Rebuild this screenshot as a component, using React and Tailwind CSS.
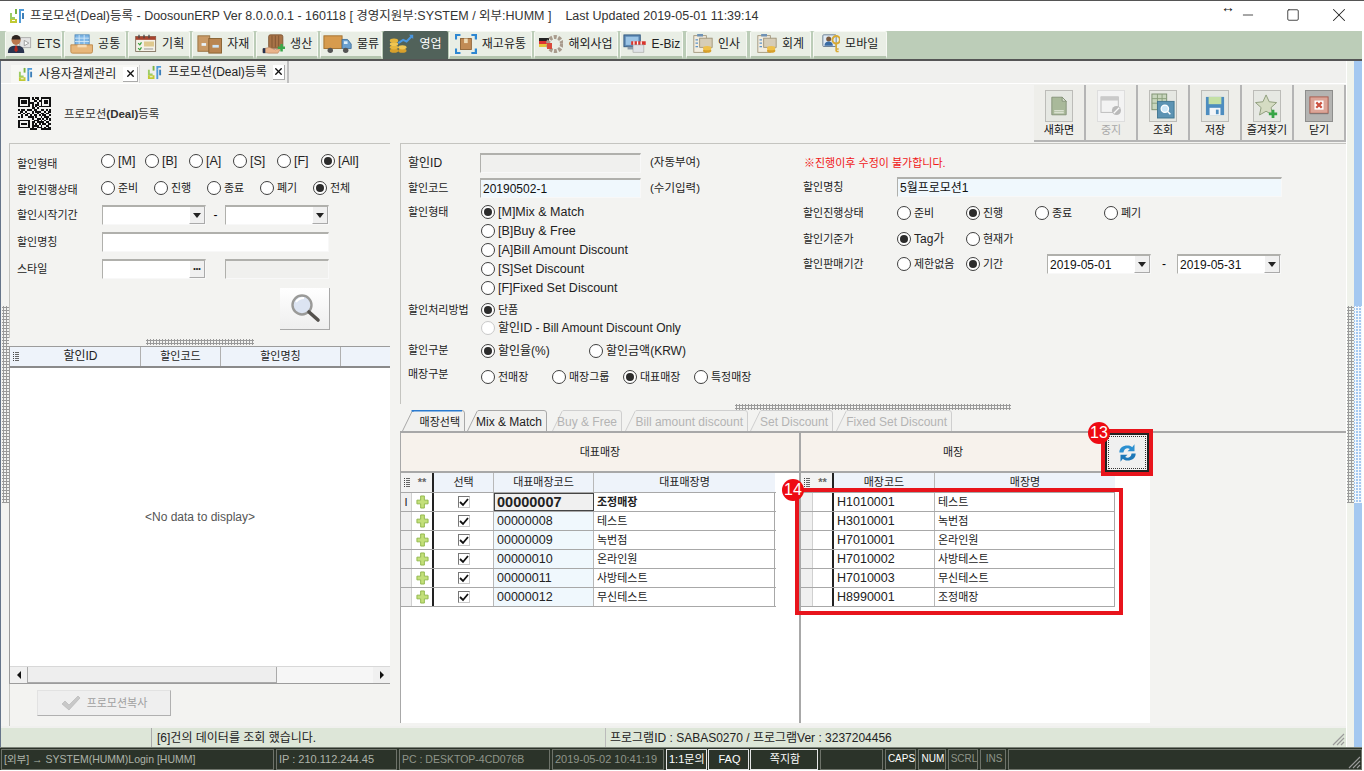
import React from "react";
import { Minus, Square, X } from "lucide-react";

const menus = [
  ["ETS", "w-[57px] mr-[2px]", "person"],
  ["공통", "w-[62px] mr-[2px]", "tray"],
  ["기획", "w-[62px] mr-[2px]", "plan"],
  ["자재", "w-[62px] mr-[2px]", "box"],
  ["생산", "w-[62px] mr-[2px]", "hand"],
  ["물류", "w-[62px] mr-[1px]", "truck"],
  ["영업", "w-[65px] mr-[1px]", "chart"],
  ["재고유통", "w-[83px] mr-[2px]", "stock"],
  ["해외사업", "w-[84px] mr-[2px]", "gear"],
  ["E-Biz", "w-[63px] mr-[3px]", "shop"],
  ["인사", "w-[61px] mr-[3px]", "clip"],
  ["회계", "w-[61px] mr-[2px]", "clip"],
  ["모바일", "w-[74px]", "key"],
];

function MenuIcon({ type }) {
  if (type === "person")
    return (
      <svg width="28" height="22" viewBox="0 0 28 22">
        <rect x="14" y="4" width="12" height="11" fill="#e4e4e4" stroke="#aaa" />
        <path d="M19 7l5 3-5 3z" fill="#fff" stroke="#999" />
        <circle cx="10" cy="7" r="5" fill="#b9764c" />
        <path d="M5 6a5 5 0 0110 0z" fill="#2c2420" />
        <path d="M1 21c0-6 3-8 9-8s9 2 9 8z" fill="#2a3550" />
        <path d="M9 13h2l1 5-2 2-2-2z" fill="#b3261e" />
      </svg>
    );
  if (type === "tray")
    return (
      <svg width="28" height="24" viewBox="0 0 28 24">
        <rect x="6" y="1" width="17" height="14" fill="#7db6e6" stroke="#4f87b8" />
        <path d="M6 5h17M6 9h17M11 1v14M17 1v14" stroke="#d9ecf9" />
        <path d="M1 13h26v8a2 2 0 01-2 2H3a2 2 0 01-2-2z" fill="#e7b77b" stroke="#b98444" />
        <rect x="9" y="13" width="11" height="3" fill="#f6dcb6" />
      </svg>
    );
  if (type === "plan")
    return (
      <svg width="28" height="24" viewBox="0 0 28 24">
        <rect x="2" y="3" width="24" height="18" fill="#f4f1e8" stroke="#7a6a58" />
        <path d="M2 3h24v4H2z" fill="#a8442e" />
        <path d="M6 1v4M12 1v4M18 1v4" stroke="#444" strokeWidth="1.5" />
        <path d="M5 11l2 2 2-3M5 17l2 2 2-3" stroke="#38a03c" strokeWidth="1.5" fill="none" />
        <rect x="12" y="9" width="12" height="6" fill="#dfc98f" />
        <path d="M12 18h11" stroke="#888" />
      </svg>
    );
  if (type === "box")
    return (
      <svg width="28" height="22" viewBox="0 0 28 22">
        <rect x="1" y="2" width="13" height="17" fill="#c99a66" stroke="#96703f" />
        <rect x="13" y="5" width="14" height="16" fill="#b98551" stroke="#86602f" />
        <rect x="5" y="10" width="5" height="3" fill="#e9f3fa" />
        <rect x="17" y="12" width="7" height="3" fill="#cfe4f5" />
      </svg>
    );
  if (type === "hand")
    return (
      <svg width="28" height="24" viewBox="0 0 28 24">
        <rect x="8" y="1" width="17" height="16" rx="2" fill="#a87347" stroke="#7b5230" />
        <path d="M12 2v14M16 2v14M20 2v14" stroke="#7b5230" />
        <path d="M1 18l8-2 7 3 7-2-4 6H8l-7-1z" fill="#e9b48c" stroke="#a7704a" strokeWidth=".6" />
        <path d="M1 17h3v6H1z" fill="#26324f" />
        <path d="M22 12h3v3h3v3h-3v3h-3v-3h-3v-3h3z" fill="#3aa84a" />
      </svg>
    );
  if (type === "truck")
    return (
      <svg width="32" height="22" viewBox="0 0 32 22">
        <rect x="1" y="2" width="20" height="14" fill="#d79b4e" stroke="#a26f2c" />
        <path d="M21 6h6l4 5v5H21z" fill="#6aa0d0" stroke="#44739c" />
        <rect x="23" y="8" width="4" height="3" fill="#dff0fb" />
        <circle cx="8" cy="18" r="3" fill="#555" />
        <circle cx="25" cy="18" r="3" fill="#555" />
      </svg>
    );
  if (type === "chart")
    return (
      <svg width="30" height="24" viewBox="0 0 30 24">
        <ellipse cx="6" cy="20" rx="5" ry="2.500" fill="#d7a02c" />
        <ellipse cx="6" cy="16" rx="5" ry="2.500" fill="#e6b63e" />
        <ellipse cx="6" cy="12" rx="5" ry="2.500" fill="#f0c653" />
        <ellipse cx="6" cy="8" rx="5" ry="2.500" fill="#e6b63e" />
        <ellipse cx="16" cy="20" rx="5" ry="2.500" fill="#d7a02c" />
        <ellipse cx="16" cy="16" rx="5" ry="2.500" fill="#f0c653" />
        <path d="M11 11l6-4 4 2 7-7" stroke="#4b97df" strokeWidth="2.500" fill="none" />
        <path d="M24 1h5v5z" fill="#4b97df" />
      </svg>
    );
  if (type === "stock")
    return (
      <svg width="24" height="22" viewBox="0 0 24 22">
        <path d="M1 6V1h5M18 1h5v5M23 16v5h-5M6 21H1v-5" stroke="#2d87d2" strokeWidth="2.500" fill="none" />
        <rect x="6" y="5" width="12" height="12" fill="#c18b55" stroke="#8e6234" />
        <rect x="10" y="5" width="4" height="5" fill="#eedcb8" />
      </svg>
    );
  if (type === "gear")
    return (
      <svg width="24" height="20" viewBox="0 0 24 20">
        <rect x="0" y="4" width="10" height="3" fill="#222" />
        <rect x="0" y="7" width="10" height="3" fill="#d33" />
        <rect x="0" y="10" width="10" height="3" fill="#e5c33b" />
        <circle cx="16" cy="10" r="7" fill="none" stroke="#a89b8d" strokeWidth="4" strokeDasharray="3 1.500" />
        <rect x="8" y="9" width="5" height="6" fill="#d94a3b" />
      </svg>
    );
  if (type === "shop")
    return (
      <svg width="26" height="22" viewBox="0 0 26 22">
        <rect x="1" y="1" width="18" height="13" fill="#5d89b5" stroke="#33587e" />
        <rect x="3" y="3" width="14" height="9" fill="#9cc4e5" />
        <path d="M5 14h10v3H5z" fill="#8a99a8" />
        <path d="M9 8h16v4H9z" fill="#d8342c" />
        <path d="M12 8v4M16 8v4M20 8v4" stroke="#fff" strokeWidth="1.400" />
        <rect x="11" y="12" width="12" height="8" fill="#dfe3e6" stroke="#888" strokeWidth=".5" />
      </svg>
    );
  if (type === "clip")
    return (
      <svg width="24" height="24" viewBox="0 0 24 24">
        <rect x="1" y="2" width="15" height="20" fill="#f2ede0" stroke="#9b8e73" />
        <rect x="5" y="0" width="7" height="3" fill="#6f92b5" />
        <path d="M3 7h3M3 11h3M3 15h3" stroke="#5c93c8" strokeWidth="1.500" />
        <rect x="8" y="5" width="15" height="11" fill="#d6cdb7" stroke="#9b8e73" />
        <ellipse cx="17" cy="20" rx="5" ry="2.500" fill="#d7a02c" />
        <ellipse cx="17" cy="17" rx="5" ry="2.500" fill="#eec14c" />
      </svg>
    );
  return (
    <svg width="22" height="24" viewBox="0 0 22 24">
      <rect x="1" y="1" width="16" height="14" rx="1" fill="#dfeaf4" stroke="#586d86" />
      <circle cx="8" cy="6" r="3" fill="#7a5a3f" />
      <path d="M3 14c0-4 3-5 5-5s5 1 5 5z" fill="#3a6ca3" />
      <circle cx="17" cy="7" r="4.500" fill="none" stroke="#d8aa35" strokeWidth="2.400" />
      <path d="M17 11v10M17 18h3M17 21h3" stroke="#d8aa35" strokeWidth="2" />
    </svg>
  );
}

function AppLogo({ size = 16 }) {
  return (
    <svg width={size} height={size} viewBox="0 0 16 16" className="shrink-0">
      <path d="M6 1h2v5H6z" fill="#7cb342" />
      <path d="M1 5h2v4h3v2H1z" fill="#9ccc65" />
      <path d="M1 11h7v4H1zM3 12v1h3v-1z" fill="#c0ca33" fillRule="evenodd" />
      <path d="M10 5h2v10h-2z" fill="#4f9bd9" />
      <path d="M10 1h5v2h-3v2h-2z" fill="#4f9bd9" />
      <path d="M13 5h2v6h-2z" fill="#3d7fb9" />
    </svg>
  );
}

function QrCode() {
  const rows = [
    "1111111010110111111",
    "1000001011010100001",
    "1011101001101101101",
    "1011101110010101101",
    "1000001010110100001",
    "1111111010101111111",
    "0000000011010000000",
    "1011011101100110101",
    "0110100010111001011",
    "1101011010010110110",
    "0010110101101011001",
    "1010001110100101110",
    "0000000010011010101",
    "1111111001110101001",
    "1000001011011110110",
    "1011101010101011011",
    "1000001011110100110",
    "1111111010011101011",
    "0000000111100111111",
  ];
  return (
    <svg width="33" height="33" viewBox="0 0 19 19" shapeRendering="crispEdges" className="shrink-0">
      {rows.map((row, y) =>
        row.split("").map((c, x) => (c === "1" ? <rect key={x + "-" + y} x={x} y={y} width="1" height="1" fill="#111" /> : null))
      )}
    </svg>
  );
}

function ToolIcon({ type }) {
  if (type === "new")
    return (
      <svg width="16" height="22" viewBox="0 0 20 24">
        <path d="M1 1h13l5 5v17H1z" fill="#a9b99a" stroke="#7c8a70" />
        <path d="M14 1v5h5z" fill="#dbe4d2" stroke="#7c8a70" />
        <path d="M4 18h12M4 20.500h12" stroke="#f1f5ec" strokeWidth="1.200" />
      </svg>
    );
  if (type === "stop")
    return (
      <svg width="22" height="20" viewBox="0 0 24 22" opacity=".65">
        <rect x="1" y="1" width="19" height="17" fill="#f4f4f4" stroke="#9a9a9a" />
        <rect x="1" y="1" width="19" height="4" fill="#b5b5b5" />
        <circle cx="18" cy="16" r="5" fill="#9c9c9c" />
        <path d="M15 19l6-6" stroke="#fff" strokeWidth="1.400" />
      </svg>
    );
  if (type === "search")
    return (
      <svg width="24" height="26" viewBox="0 0 26 28">
        <rect x="1" y="1" width="16" height="17" fill="#c8d6bd" stroke="#7c8f70" />
        <path d="M1 6h16M1 11h16M7 1v17M12 1v17" stroke="#8aa07c" />
        <rect x="7" y="9" width="18" height="18" fill="#5c93b3" stroke="#40758f" />
        <circle cx="15" cy="17" r="4" fill="#cfe8f7" stroke="#fff" strokeWidth="1.400" />
        <path d="M18 20l3 3" stroke="#fff" strokeWidth="1.600" />
      </svg>
    );
  if (type === "save")
    return (
      <svg width="20" height="20" viewBox="0 0 22 22">
        <path d="M1 1h20v20H1z" fill="#4d8dbf" />
        <rect x="4" y="1" width="14" height="8" fill="#c4e0a4" />
        <rect x="5" y="13" width="12" height="8" fill="#f2f5f8" />
        <rect x="12" y="15" width="3" height="5" fill="#4d8dbf" />
      </svg>
    );
  if (type === "fav")
    return (
      <svg width="24" height="24" viewBox="0 0 26 26">
        <path d="M12 1l3.400 7.400 8 .9-6 5.400 1.700 8-7.100-4-7.100 4 1.700-8-6-5.400 8-.9z" fill="#d5dcc3" stroke="#8b9a78" />
        <path d="M18 17h3v3h3v3h-3v3h-3v-3h-3v-3h3z" fill="#37a547" />
      </svg>
    );
  return (
    <svg width="20" height="20" viewBox="0 0 22 22">
      <rect x="1" y="1" width="20" height="18" fill="#dca598" stroke="#a8584a" />
      <rect x="6" y="5" width="10" height="10" fill="#fff" />
      <path d="M8 7l6 6M14 7l-6 6" stroke="#cc5241" strokeWidth="2.400" />
      <rect x="1" y="19" width="20" height="1" fill="#777" />
    </svg>
  );
}

function ToolButton({ label, type, disabled, dark }) {
  return (
    <div className="flex flex-col items-center w-[52px] h-[57px] bg-[#eeeeea] border-r-2 border-b-2 border-[#b5b5b5] pt-[5px]">
      <div className={`flex items-center justify-center w-[28px] h-[32px] border ${dark ? "bg-[#b4b4b2] border-[#8e8e8c]" : disabled ? "bg-[#f3f3f3] border-[#dedede]" : "bg-[#e6e8e3] border-[#bcbcb8]"}`}>
        <ToolIcon type={type} />
      </div>
      <span className={`text-[11px] leading-[14px] mt-[1px] whitespace-nowrap ${disabled ? "text-[#a8a8a8]" : "text-[#111]"}`}>{label}</span>
    </div>
  );
}

const hasHangul = (s) => /[가-힣]/.test(s);
const onlyKorean = (s) => hasHangul(s) && !/[A-Za-z%]/.test(s);

function Radio({ label, checked, disabled, cls = "" }) {
  const size = onlyKorean(label) ? "text-[11px]" : hasHangul(label) ? "text-[12px]" : "text-[12.5px]";
  return (
    <div className={`flex items-center gap-[3px] shrink-0 ${cls}`}>
      <span className={`flex items-center justify-center w-[14px] h-[14px] rounded-full border bg-white ${disabled ? "border-[#c9c9c9]" : "border-[#3f3f3f]"}`}>
        {checked && <span className="w-[8px] h-[8px] rounded-full bg-[#2b2b2b]" />}
      </span>
      <span className={`leading-[14px] text-[#222] whitespace-nowrap ${size}`}>{label}</span>
    </div>
  );
}

function Field({ w, bg = "bg-white", children, className = "" }) {
  return (
    <div className={`flex items-center h-[20px] border-t-2 border-l border-[#b0b0ac] border-r border-b border-r-[#f8f8f8] border-b-[#f8f8f8] ${bg} ${w} ${className}`}>
      {children}
    </div>
  );
}

function DropButton({ dots }) {
  return (
    <span className="ml-auto flex items-center justify-center w-[16px] h-full bg-[#f0f0f0] border-l border-white border-r border-r-[#aaa] border-b border-b-[#aaa]">
      {dots ? (
        <span className="text-[7px] leading-none font-bold text-[#222]">•••</span>
      ) : (
        <span className="w-0 h-0 border-l-[4px] border-r-[4px] border-t-[5px] border-l-transparent border-r-transparent border-t-[#222]" />
      )}
    </span>
  );
}

function Label({ children, cls = "w-[86px]" }) {
  return <span className={`leading-[14px] text-[#222] shrink-0 whitespace-nowrap ${onlyKorean(children) ? "text-[11px]" : "text-[12px]"} ${cls}`}>{children}</span>;
}

function DotsV({ white }) {
  return <div className={`h-[197px] bg-[length:3px_3px] ${white ? "bg-[radial-gradient(#f4f8fc_1px,transparent_1.2px)]" : "bg-[radial-gradient(#9a9a9a_1px,transparent_1.2px)]"}`} />;
}

function DotsH({ w }) {
  return <div className={`h-[6px] bg-[radial-gradient(#9a9a9a_1px,transparent_1.2px)] bg-[length:3px_3px] ${w}`} />;
}

function Grip() {
  return (
    <svg width="8" height="11" viewBox="0 0 8 11">
      <path d="M1 1h1v1H1zM1 3h1v1H1zM1 5h1v1H1zM1 7h1v1H1zM1 9h1v1H1z" fill="#444" />
      <path d="M3 1h4v1H3zM3 3h4v1H3zM3 5h4v1H3zM3 7h4v1H3zM3 9h4v1H3z" fill="#666" />
    </svg>
  );
}

function Resize({ cls }) {
  return (
    <svg width="13" height="13" viewBox="0 0 13 13" className={cls}>
      <path d="M1 12L12 1M5 12l7-7M9 12l3-3" stroke="#9a9a9a" strokeWidth="1.200" />
    </svg>
  );
}

function LeftPanel() {
  return (
    <div className="flex flex-col w-[381px] shrink-0">
      <div className="h-[195px] shrink-0 border-t border-l border-[#c4c4c0] pl-[7px] pt-[10px] flex flex-col">
        <div className="flex items-start h-[27px]">
          <Label cls="w-[84px] mt-[3px]">할인형태</Label>
          <div className="flex gap-[6px]">
            {["[M]", "[B]", "[A]", "[S]", "[F]"].map((t) => (
              <Radio key={t} label={t} cls="w-[38px]" />
            ))}
            <Radio label="[All]" checked />
          </div>
        </div>
        <div className="flex items-start h-[21px]">
          <Label cls="w-[84px] mt-[2px]">할인진행상태</Label>
          <div className="flex">
            {["준비", "진행", "종료", "폐기"].map((t) => (
              <Radio key={t} label={t} cls="w-[53px]" />
            ))}
            <Radio label="전체" checked />
          </div>
        </div>
        <div className="flex items-center h-[26px]">
          <Label cls="w-[85px]">할인시작기간</Label>
          <Field w="w-[104px]"><DropButton /></Field>
          <span className="w-[19px] text-center text-[12px]">-</span>
          <Field w="w-[104px]"><DropButton /></Field>
        </div>
        <div className="flex items-center h-[27px]">
          <Label cls="w-[85px]">할인명칭</Label>
          <Field w="w-[227px]" />
        </div>
        <div className="flex items-center h-[27px]">
          <Label cls="w-[85px]">스타일</Label>
          <Field w="w-[104px]"><DropButton dots /></Field>
          <Field w="w-[104px]" bg="bg-[#f0f0ee]" className="ml-[19px]" />
        </div>
        <div className="flex justify-end pr-[60px] mt-[6px]">
          <div className="flex items-center justify-center w-[50px] h-[42px] bg-gradient-to-b from-white to-[#eeeeee] border-r border-b border-[#a8a8a8]">
            <svg width="34" height="34" viewBox="0 0 34 34">
              <circle cx="14" cy="13" r="9.500" fill="#dce4f2" stroke="#9a9a98" strokeWidth="2.400" />
              <path d="M8 10c2-3 5-4 8-4" stroke="#fff" strokeWidth="2" fill="none" />
              <path d="M21 20l9 8" stroke="#55524e" strokeWidth="3.600" strokeLinecap="round" />
            </svg>
          </div>
        </div>
      </div>
      <div className="flex justify-center h-[8px] shrink-0 items-center">
        <DotsH w="w-[108px]" />
      </div>
      <div className="flex flex-col h-[338px] shrink-0 border-t border-l border-b border-[#9c9c9c] bg-white">
        <div className="flex h-[21px] bg-[#eef3fa] border-b-2 border-[#8a8a8a] text-[11px] text-[#222] text-center leading-[19px]">
          <span className="w-[11px] flex items-center justify-center"><Grip /></span>
          <span className="w-[120px] border-r border-[#b0b0b0] text-[12px]">할인ID</span>
          <span className="w-[80px] border-r border-[#b0b0b0]">할인코드</span>
          <span className="w-[120px] border-r border-[#b0b0b0]">할인명칭</span>
        </div>
        <div className="flex-1 flex items-center justify-center text-[12px] text-[#555]">&lt;No data to display&gt;</div>
        <div className="flex h-[17px] bg-[#f0f0f0] border-t border-[#d8d8d8] items-center">
          <span className="w-[17px] flex justify-center"><span className="w-0 h-0 border-y-[4px] border-r-[4px] border-y-transparent border-r-[#111]" /></span>
          <span className="w-[250px] h-full bg-[#eeeeee] border-x border-b border-[#aaa]" />
          <span className="flex-1 h-full bg-[#f6f6f6]" />
          <span className="w-[17px] flex justify-center"><span className="w-0 h-0 border-y-[4px] border-l-[4px] border-y-transparent border-l-[#111]" /></span>
        </div>
      </div>
      <div className="flex-1 border-l border-[#c4c4c0] pl-[27px] pt-[6px]">
        <div className="flex items-center justify-center gap-[6px] w-[134px] h-[26px] bg-[#efefef] border-r border-b border-[#b0b0b0] border-t border-l border-t-[#e2e2e2] border-l-[#e2e2e2]">
          <svg width="20" height="16" viewBox="0 0 20 16"><path d="M1 9l3-3 4 4 9-9 2 2L8 15z" fill="#c8c8c8" stroke="#aaa" strokeWidth=".5" /></svg>
          <span className="text-[11px] text-[#a0a0a0]">프로모션복사</span>
        </div>
      </div>
    </div>
  );
}

function FormPanel() {
  return (
    <div className="flex h-[261px] shrink-0 border-t border-l border-[#c4c4c0] pl-[7px] pt-[6px]">
      <div className="w-[395px] shrink-0 flex flex-col">
        <div className="flex items-center h-[25px]">
          <Label cls="w-[72px]">할인ID</Label>
          <Field w="w-[161px]" bg="bg-[#f0f0ee]" />
          <span className="ml-[9px] text-[11.5px] text-[#222]">(자동부여)</span>
        </div>
        <div className="flex items-center h-[24px] mt-[1px]">
          <Label cls="w-[72px]">할인코드</Label>
          <Field w="w-[161px]" bg="bg-[#f0f8fd]"><span className="text-[12px] pl-[2px] text-[#111]">20190502-1</span></Field>
          <span className="ml-[9px] text-[11.5px] text-[#222] mt-[2px]">(수기입력)</span>
        </div>
        <div className="flex h-[95px] mt-[3px]">
          <Label cls="w-[73px] mt-[2px]">할인형태</Label>
          <div className="flex flex-col gap-[5px] pt-[2px]">
            <Radio label="[M]Mix & Match" checked />
            <Radio label="[B]Buy & Free" />
            <Radio label="[A]Bill Amount Discount" />
            <Radio label="[S]Set Discount" />
            <Radio label="[F]Fixed Set Discount" />
          </div>
        </div>
        <div className="flex h-[39px] mt-[4px]">
          <Label cls="w-[73px] mt-[1px]">할인처리방법</Label>
          <div className="flex flex-col gap-[4px] pt-[1px]">
            <Radio label="단품" checked />
            <Radio label="할인ID - Bill Amount Discount Only" disabled />
          </div>
        </div>
        <div className="flex items-start h-[24px] mt-[2px]">
          <Label cls="w-[73px]">할인구분</Label>
          <Radio label="할인율(%)" checked cls="w-[108px] mt-[1px]" />
          <Radio label="할인금액(KRW)" cls="mt-[1px]" />
        </div>
        <div className="flex items-start">
          <Label cls="w-[73px]">매장구분</Label>
          <div className="flex mt-[3px]">
            {[["전매장"], ["매장그룹"], ["대표매장", true], ["특정매장"]].map(([t, c]) => (
              <Radio key={t} label={t} checked={c} cls="w-[71px]" />
            ))}
          </div>
        </div>
      </div>
      <div className="flex flex-col flex-1 min-w-0 mt-[6px]">
        <div className="h-[15px] pl-[1px] text-[11px] leading-[14px] text-[#f01818] whitespace-nowrap">※진행이후 수정이 불가합니다.</div>
        <div className="flex items-center h-[26px] mt-[3px]">
          <Label cls="w-[94px]">할인명칭</Label>
          <Field w="w-[385px]" bg="bg-[#f0f8fd]"><span className="text-[12px] pl-[2px] text-[#111]">5월프로모션1</span></Field>
        </div>
        <div className="flex items-center h-[25px]">
          <Label cls="w-[94px]">할인진행상태</Label>
          <div className="flex">
            <Radio label="준비" cls="w-[69px]" />
            <Radio label="진행" checked cls="w-[69px]" />
            <Radio label="종료" cls="w-[69px]" />
            <Radio label="폐기" />
          </div>
        </div>
        <div className="flex items-center h-[27px]">
          <Label cls="w-[94px]">할인기준가</Label>
          <Radio label="Tag가" checked cls="w-[69px]" />
          <Radio label="현재가" />
        </div>
        <div className="flex items-center h-[24px]">
          <Label cls="w-[94px]">할인판매기간</Label>
          <Radio label="제한없음" cls="w-[69px]" />
          <Radio label="기간" cls="w-[81px]" checked />
          <Field w="w-[104px]"><span className="text-[12px] pl-[2px] text-[#111]">2019-05-01</span><DropButton /></Field>
          <span className="w-[26px] text-center text-[12px]">-</span>
          <Field w="w-[104px]"><span className="text-[12px] pl-[2px] text-[#111]">2019-05-31</span><DropButton /></Field>
        </div>
      </div>
    </div>
  );
}

function Tab({ label, active, disabled, width, cls }) {
  const d = `M0.5 21 L10 1.5 Q10.500 0.5 12 0.5 H${width - 3} Q${width - 0.5} 0.5 ${width - 0.5} 3 V21`;
  return (
    <div className={`relative h-[21px] shrink-0 flex items-center justify-end pr-[5px] pt-[3px] text-[12px] leading-[14px] whitespace-nowrap ${cls} ${disabled ? "text-[#b4b4b4]" : "text-[#222]"}`}>
      <svg width={width} height="21" className="absolute left-0 top-0">
        <path d={d} fill="#f1f1ef" stroke={disabled ? "#cfcfcf" : "#a8a8a8"} />
        {active && <path d={`M10 1.500 Q10.500 0.5 12 0.5 H${width - 3}`} fill="none" stroke="#2a7bd0" strokeWidth="2" />}
      </svg>
      <span className={`relative ${onlyKorean(label) ? "text-[11px]" : ""}`}>{label}</span>
    </div>
  );
}

const leftRows = [
  ["00000007", "조정매장"],
  ["00000008", "테스트"],
  ["00000009", "녹번점"],
  ["00000010", "온라인원"],
  ["00000011", "사방테스트"],
  ["00000012", "무신테스트"],
];

const rightRows = [
  ["H1010001", "테스트"],
  ["H3010001", "녹번점"],
  ["H7010001", "온라인원"],
  ["H7010002", "사방테스트"],
  ["H7010003", "무신테스트"],
  ["H8990001", "조정매장"],
];

function Plus() {
  return (
    <svg width="13" height="14" viewBox="0 0 14 15">
      <path d="M5 1h4v4.500h4v4H9v4.500H5v-4.500H1v-4h4z" fill="#c3e07a" stroke="#8fb548" />
    </svg>
  );
}

function LeftGrid() {
  return (
    <div className="w-[375px] text-[#222]">
      <div className="flex h-[20px] bg-white border-b border-[#a8a8a8] text-[11px] leading-[18px] text-center">
        <span className="w-[11px] flex items-center justify-center bg-[#f3f3f3]"><Grip /></span>
        <span className="w-[22px] bg-[#f3f3f3] border-r-2 border-[#222] font-bold text-[#666]">**</span>
        <span className="w-[60px] bg-[#eef3fa] border-r border-[#b8b8b8]">선택</span>
        <span className="w-[100px] bg-[#eef3fa] border-r border-[#b8b8b8]">대표매장코드</span>
        <span className="w-[181px] bg-[#eef3fa]">대표매장명</span>
      </div>
      {leftRows.map(([code, name], i) => (
        <div key={code} className="flex h-[19px] border-b border-[#a8a8a8] bg-white">
          <span className="w-[11px] bg-[#f0f0f0] border-r border-[#d0d0d0] flex items-center justify-center text-[11px] leading-none text-[#222]">{i === 0 ? "I" : ""}</span>
          <span className="w-[22px] border-r-2 border-[#222] flex items-center justify-center"><Plus /></span>
          <span className="w-[60px] border-r border-[#b8b8b8] flex items-center justify-center">
            <span className="flex items-center justify-center w-[12px] h-[12px] border border-[#c8c8c8] border-t-[#777] border-l-[#777] bg-white">
              <svg width="10" height="9" viewBox="0 0 10 9"><path d="M1 4l3 3 5-6" stroke="#111" strokeWidth="1.800" fill="none" /></svg>
            </span>
          </span>
          {i === 0 ? (
            <span className="w-[100px] border border-[#444] bg-[#f0f0f0] text-[14.5px] font-bold leading-[17px] pl-[2px]">{code}</span>
          ) : (
            <span className="w-[100px] border-r border-[#b8b8b8] bg-[#f0f8fd] text-[12.5px] leading-[19px] pl-[3px]">{code}</span>
          )}
          <span className={`w-[181px] border-r border-[#a8a8a8] pl-[3px] text-[11px] leading-[18px] ${i === 0 ? "font-bold" : ""}`}>{name}</span>
        </div>
      ))}
    </div>
  );
}

function RightGrid() {
  return (
    <div className="w-[314px] text-[#222]">
      <div className="flex h-[20px] bg-white border-b border-[#a8a8a8] text-[11px] leading-[18px] text-center">
        <span className="w-[12px] flex items-center justify-center bg-[#f3f3f3]"><Grip /></span>
        <span className="w-[21px] bg-[#f3f3f3] border-r-2 border-[#222] font-bold text-[#666]">**</span>
        <span className="w-[101px] bg-[#eef3fa] border-r border-[#b8b8b8]">매장코드</span>
        <span className="w-[180px] bg-[#eef3fa]">매장명</span>
      </div>
      {rightRows.map(([code, name]) => (
        <div key={code} className="flex h-[19px] border-b border-[#a8a8a8] bg-white">
          <span className="w-[12px] bg-[#f0f0f0] border-r border-[#d0d0d0]" />
          <span className="w-[21px] border-r-2 border-[#222]" />
          <span className="w-[101px] border-r border-[#b8b8b8] pl-[3px] text-[12.5px] leading-[19px]">{code}</span>
          <span className="w-[180px] border-r border-[#a8a8a8] pl-[3px] text-[11px] leading-[18px]">{name}</span>
        </div>
      ))}
    </div>
  );
}

function Badge({ n, cls }) {
  return (
    <span className={`absolute z-20 flex items-center justify-center w-[22px] h-[22px] rounded-full bg-[#ee0a12] text-white text-[16px] leading-none ${cls}`}>{n}</span>
  );
}

function TabPanel() {
  return (
    <div className="flex flex-col flex-1 min-h-0">
      <div className="flex justify-center h-[6px] shrink-0">
        <DotsH w="w-[276px]" />
      </div>
      <div className="flex h-[21px] pl-[2px] shrink-0">
        <Tab label="매장선택" active width={63} cls="w-[63px] mr-[2px]" />
        <Tab label="Mix & Match" width={80} cls="w-[80px] mr-[5px]" />
        <Tab label="Buy & Free" disabled width={70} cls="w-[70px] mr-[3px]" />
        <Tab label="Bill amount discount" disabled width={123} cls="w-[123px] mr-[2px]" />
        <Tab label="Set Discount" disabled width={83} cls="w-[83px] mr-[3px]" />
        <Tab label="Fixed Set Discount" disabled width={116} cls="w-[116px]" />
      </div>
      <div className="flex flex-1 min-h-0 border-t-2 border-[#a8a8a8] mb-[3px]">
        <div className="w-[401px] shrink-0 border-l border-r-2 border-[#a8a8a8] flex flex-col bg-white">
          <div className="h-[40px] shrink-0 bg-[#f7f2ec] border-b-2 border-[#a8a8a8] flex items-center justify-center text-[11px] text-[#222]">대표매장</div>
          <LeftGrid />
        </div>
        <div className="relative w-[349px] shrink-0 flex flex-col bg-white">
          <div className="h-[40px] shrink-0 bg-[#f7f2ec] border-b-2 border-[#a8a8a8] flex items-center justify-center text-[11px] text-[#222] w-[304px]">매장</div>
          <RightGrid />
          {/* callouts drawn over the grid */}
          <div className="absolute left-[300px] top-[-4px] z-10 w-[52px] h-[47px] border-[4px] border-[#e8141c] bg-[#f0f0f0]">
            <div className="w-full h-full border-2 border-[#222] flex items-center justify-center">
              <div className="w-[38px] h-[33px] border border-dotted border-[#333] flex items-center justify-center">
                <svg width="21" height="20" viewBox="0 0 18 17">
                  <path d="M2 8c0-4 3-6 7-6 2 0 3 .5 4 1.500L15 1v6H9l2-2c-2-1.500-5-.5-5.500 3z" fill="#2b8fd0" />
                  <path d="M16 9c0 4-3 6-7 6-2 0-3-.5-4-1.500L3 16v-6h6l-2 2c2 1.500 5 .5 5.500-3z" fill="#1d78b8" />
                </svg>
              </div>
            </div>
          </div>
          <Badge n="13" cls="left-[287px] top-[-11px]" />
          <div className="absolute left-[-6px] top-[55px] w-[328px] h-[127px] border-[4px] border-[#e8141c] z-10" />
          <Badge n="14" cls="left-[-19px] top-[46px]" />
        </div>
      </div>
    </div>
  );
}

function BarCell({ w, children, dim, cls = "" }) {
  return (
    <div className={`h-[21px] shrink-0 border flex items-center pl-[2px] leading-none whitespace-nowrap overflow-hidden ${dim ? "text-[#8f958a]" : "text-[#aeb3a9]"} ${w} ${cls}`}>
      {children}
    </div>
  );
}

export default function App() {
  return (
    <div className="w-[1364px] h-[771px] overflow-hidden flex flex-col bg-white font-['Liberation_Sans','Noto_Sans_CJK_KR',sans-serif]">
      <div className="relative shrink-0 h-[31px] bg-white border-t border-[#555] flex items-center pl-[9px] text-[12.5px] text-[#333] whitespace-nowrap">
        <AppLogo />
        <span className="ml-[5px]">프로모션(Deal)등록 - DoosounERP Ver 8.0.0.0.1 - 160118 [ 경영지원부:SYSTEM / 외부:HUMM ]</span>
        <span className="ml-[14px]">Last Updated 2019-05-01 11:39:14</span>
        <span className="absolute left-[1221px] top-[0px] text-[14px] leading-[12px] text-[#111]">↔</span>
        <Minus className="absolute left-[1240px] top-[6px] text-[#222]" size={16} strokeWidth={1.2} />
        <Square className="absolute left-[1286px] top-[7px] text-[#222]" size={14} strokeWidth={1.4} />
        <X className="absolute left-[1328px] top-[3px] text-[#222]" size={22} strokeWidth={1.1} />
      </div>

      <div className="shrink-0 h-[30px] bg-[#bccdb8] border-b-2 border-[#555] flex items-end pl-[5px] mr-[2px]">
        {menus.map(([label, w, icon], i) => {
          const active = label === "영업";
          return (
            <div key={i} className={`h-[28px] shrink-0 flex items-center justify-center gap-[5px] text-[12px] leading-none rounded-t-[2px] border-t border-l border-r border-b-[3px] [&_svg]:h-[20px] [&_svg]:w-auto ${w} ${active ? "bg-[#51625a] text-white border-[#51625a]" : "bg-[#e9eee5] text-[#222] border-[#f7f9f4] border-b-[#b3c4ae]"}`}>
              <MenuIcon type={icon} />
              <span className="whitespace-nowrap">{label}</span>
            </div>
          );
        })}
      </div>

      <div className="flex-1 min-h-0 flex">
        <div className="w-[1346px] shrink-0 flex flex-col border-l border-[#66758a]">
          <div className="shrink-0 h-[23px] bg-[#f0f0ee] border-b border-white flex items-start pl-[10px] text-[12px] text-[#222]">
            <div className="flex items-center h-[18px] mt-[4px] w-[129px] bg-[#f7f7f4] pl-[7px] gap-[6px] border-r border-[#d8d8d8]">
              <AppLogo size={15} />
              <span className="whitespace-nowrap">사용자결제관리</span>
              <span className="ml-auto mr-[1px] w-[15px] h-[15px] bg-white border-r border-b border-[#aaa] flex items-center justify-center"><X size={11} strokeWidth={3} className="text-[#111]" /></span>
            </div>
            <div className="flex items-center h-[22px] w-[149px] pl-[7px] gap-[6px] border-r-2 border-[#c0c0c0]">
              <AppLogo size={15} />
              <span className="whitespace-nowrap">프로모션(Deal)등록</span>
              <span className="ml-auto mr-[4px] w-[15px] h-[15px] bg-white border-r border-b border-[#aaa] flex items-center justify-center"><X size={11} strokeWidth={3} className="text-[#111]" /></span>
            </div>
          </div>

          <div className="flex-1 min-h-0 flex bg-[#f3f3f1]">
            <div className="w-[8px] shrink-0 pt-[222px] pl-[1px]"><DotsV /></div>
            <div className="flex-1 min-w-0 flex flex-col">
              <div className="shrink-0 h-[59px] flex items-start">
                <div className="flex items-center pl-[9px] pt-[13px]">
                  <QrCode />
                  <span className="ml-[13px] mt-[3px] text-[11.5px] leading-none text-[#333] whitespace-nowrap">프로모션<span className="font-bold">(Deal)</span>등록</span>
                </div>
                <div className="ml-auto flex pt-[1px]">
                  <ToolButton label="새화면" type="new" />
                  <ToolButton label="중지" type="stop" disabled />
                  <ToolButton label="조회" type="search" />
                  <ToolButton label="저장" type="save" />
                  <ToolButton label="즐겨찾기" type="fav" />
                  <ToolButton label="닫기" type="close" dark />
                </div>
              </div>
              <div className="flex-1 min-h-0 flex">
                <LeftPanel />
                <div className="w-[10px] shrink-0" />
                <div className="flex-1 min-w-0 flex flex-col">
                  <FormPanel />
                  <TabPanel />
                </div>
              </div>
            </div>
          </div>

          <div className="relative shrink-0 h-[21px] flex bg-[#dde6d8] border-t-2 border-[#f0f0ee] text-[12px] text-[#222]">
            <div className="w-[143px] ml-[8px] border-r border-[#aaa]" />
            <div className="flex items-center pl-[5px] w-[454px] border-r border-[#bbb] whitespace-nowrap">[6]건의 데이터를 조회 했습니다.</div>
            <div className="flex items-center pl-[4px] whitespace-nowrap">프로그램ID : SABAS0270 / 프로그램Ver : 3237204456</div>
            <Resize cls="absolute right-[1px] bottom-[1px]" />
          </div>
        </div>

        <div className="w-[8px] shrink-0 bg-[#eff2eb] border-l border-white pt-[245px]"><DotsV /></div>
        <div className="w-[8px] shrink-0 bg-[#a4c8f0] pt-[245px]"><DotsV white /></div>
        <div className="w-[2px] shrink-0 bg-white" />
      </div>

      <div className="relative shrink-0 h-[23px] mr-[2px] mb-[1px] bg-[#2b3329] border-t border-[#7c8278] flex items-center gap-[2px] pl-[1px] text-[11px]">
        <BarCell w="w-[273px]" cls="text-[10.5px] border-[#6e736a]">[외부] → SYSTEM(HUMM)Login [HUMM]</BarCell>
        <BarCell w="w-[121px]" cls="border-[#6e736a]">IP : 210.112.244.45</BarCell>
        <BarCell w="w-[151px]" cls="text-[10.5px] border-[#6e736a]" dim>PC : DESKTOP-4CD076B</BarCell>
        <BarCell w="w-[112px]" cls="border-[#6e736a]" dim>2019-05-02 10:41:19</BarCell>
        <BarCell w="w-[41px]" cls="border-[#e6e6e6] mr-[-1px]"><span className="text-white">1:1문의</span></BarCell>
        <BarCell w="w-[41px]" cls="border-[#e6e6e6] justify-center mr-[-1px]"><span className="text-white">FAQ</span></BarCell>
        <BarCell w="w-[68px]" cls="border-[#e6e6e6] justify-center"><span className="text-white">쪽지함</span></BarCell>
        <BarCell w="w-[63px]" cls="border-[#6e736a]"> </BarCell>
        <BarCell w="w-[31px]" cls="text-[10px] justify-center border-[#6e736a] pl-0"><span className="text-white">CAPS</span></BarCell>
        <BarCell w="w-[28px]" cls="text-[10px] justify-center border-[#6e736a] pl-0"><span className="text-white">NUM</span></BarCell>
        <BarCell w="w-[30px]" cls="text-[10px] justify-center border-[#6e736a] pl-0" dim>SCRL</BarCell>
        <BarCell w="w-[26px]" cls="text-[10px] justify-center border-[#6e736a] pl-0" dim>INS</BarCell>
        <div className="flex-1 h-[21px] border border-[#6e736a]" />
        <Resize cls="absolute right-[1px] bottom-[1px]" />
      </div>
    </div>
  );
}
